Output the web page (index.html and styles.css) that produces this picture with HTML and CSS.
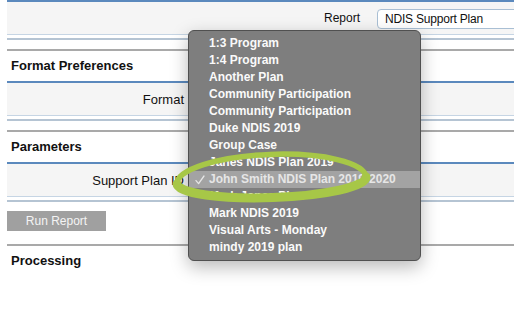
FILE: index.html
```html
<!DOCTYPE html>
<html>
<head>
<meta charset="utf-8">
<link rel="stylesheet" href="styles.css">
</head>
<body>
<div class="page">
  <div class="panel">
    <div class="panel-row">
      <span class="field-label report-label">Report</span>
      <div class="select">NDIS Support Plan</div>
    </div>
  </div>
  <h2 class="section-head">Format Preferences</h2>
  <div class="panel">
    <div class="panel-row"><span class="field-label">Format</span></div>
  </div>
  <h2 class="section-head">Parameters</h2>
  <div class="panel">
    <div class="panel-row"><span class="field-label">Support Plan ID</span></div>
  </div>
  <div class="actions"><button class="run-btn">Run Report</button></div>
  <h2 class="section-head">Processing</h2>
</div>

<div class="menu">
  <div class="menu-item">1:3 Program</div>
  <div class="menu-item">1:4 Program</div>
  <div class="menu-item">Another Plan</div>
  <div class="menu-item">Community Participation</div>
  <div class="menu-item">Community Participation</div>
  <div class="menu-item">Duke NDIS 2019</div>
  <div class="menu-item">Group Case</div>
  <div class="menu-item">Janes NDIS Plan 2019</div>
  <div class="menu-item selected"><svg class="check" width="10" height="10" viewBox="0 0 10 10"><polyline points="1,5.6 3.6,8.6 9,1" fill="none" stroke="#e6e6e6" stroke-width="1.3" stroke-linecap="round" stroke-linejoin="round"/></svg>John Smith NDIS Plan 2019-2020</div>
  <div class="menu-item">Mark Jones Plan</div>
  <div class="menu-item">Mark NDIS 2019</div>
  <div class="menu-item">Visual Arts - Monday</div>
  <div class="menu-item">mindy 2019 plan</div>
</div>

<svg class="highlight" width="514" height="317" viewBox="0 0 514 317">
  <path d="M177,184 A94,26 -2 0 1 366,177" fill="none" stroke="#a7c747" stroke-width="5.5" stroke-linecap="round"/>
  <path d="M366,177 A94,17 -2 0 1 177,184" fill="none" stroke="#a7c747" stroke-width="9" stroke-linecap="round"/>
</svg>
</body>
</html>
```

FILE: styles.css
```css
html, body {
  margin: 0;
  padding: 0;
  background: #fff;
  overflow: hidden;
}
body {
  width: 514px;
  height: 317px;
  position: relative;
  font-family: "Liberation Sans", Arial, sans-serif;
  color: #111;
}
.page {
  margin-left: 7px;
}
.panel {
  border-top: 2px solid #5b89bd;
  padding-bottom: 9px;
}
.panel::after {
  content: "";
  display: block;
  margin-top: 3px;
  border-top: 2px solid #b5c4d3;
}
.panel-row {
  height: 32px;
  background: #f5f5f5;
  border-bottom: 1px solid #c6d5e4;
  display: flex;
  align-items: center;
  overflow: hidden;
}
.field-label {
  width: 177px;
  flex-shrink: 0;
  text-align: right;
  font-size: 13px;
}
.report-label {
  width: 353px;
  font-size: 12px;
}
.select {
  margin-left: 17px;
  margin-top: 2px;
  flex-shrink: 0;
  width: 160px;
  height: 20px;
  box-sizing: border-box;
  border: 1px solid #a9bfd4;
  border-radius: 4px;
  background: #fff;
  padding-left: 7px;
  font-size: 12px;
  letter-spacing: -0.2px;
  display: flex;
  align-items: center;
}
.section-head {
  margin: 0;
  border-top: 2px solid #a9a9a9;
  height: 30px;
  line-height: 30px;
  padding-left: 4px;
  font-size: 13px;
  font-weight: bold;
  color: #111;
}
.actions {
  padding-bottom: 13px;
}
.run-btn {
  display: block;
  width: 99px;
  height: 20px;
  padding: 0;
  border: none;
  background: #a0a0a0;
  color: #f4f4f4;
  font-family: "Liberation Sans", Arial, sans-serif;
  font-size: 12px;
}
.menu {
  position: absolute;
  left: 188px;
  top: 30px;
  width: 233px;
  height: 231px;
  box-sizing: border-box;
  padding: 4px 0;
  background: #7e7e7e;
  border: 1px solid #505050;
  border-radius: 6px;
  box-shadow: 0 6px 18px rgba(0, 0, 0, 0.28);
}
.menu-item {
  position: relative;
  height: 17px;
  line-height: 17px;
  padding-left: 20px;
  font-size: 12px;
  font-weight: bold;
  color: #fafafa;
  white-space: nowrap;
}
.menu-item.selected {
  background: #a3a3a3;
  color: #e6e6e6;
}
.check {
  position: absolute;
  left: 6px;
  top: 4px;
}
.highlight {
  position: absolute;
  left: 0;
  top: 0;
  pointer-events: none;
}
```
